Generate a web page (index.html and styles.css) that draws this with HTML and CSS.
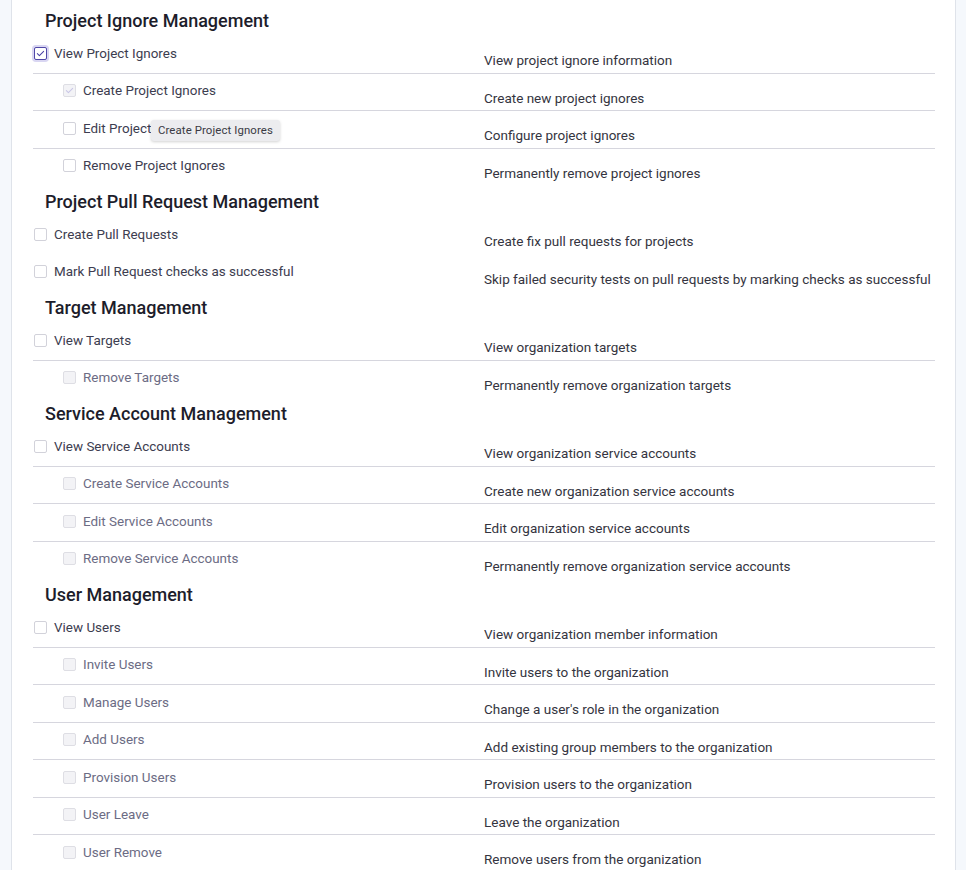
FILE: index.html
```html
<!DOCTYPE html>
<html lang="en">
<head>
<meta charset="utf-8">
<title>Permissions</title>
<link rel="stylesheet" href="styles.css">
</head>
<body>
<div class="shell">
  <div class="gutter"></div>
  <main class="panel">
    <section class="group">
      <h2 class="group-title">Project Ignore Management</h2>
      <div class="perm line">
        <label class="perm-label"><span class="cb cb-checked cb-focus"><svg viewBox="0 0 14 14"><path d="M3 7.2l2.6 2.6L11 4.2"/></svg></span>View Project Ignores</label>
        <div class="perm-desc">View project ignore information</div>
      </div>
      <div class="perm line child">
        <label class="perm-label"><span class="cb cb-disabled cb-checked-disabled"><svg viewBox="0 0 14 14"><path d="M3 7.2l2.6 2.6L11 4.2"/></svg></span>Create Project Ignores</label>
        <div class="perm-desc">Create new project ignores</div>
      </div>
      <div class="perm line child has-tip">
        <label class="perm-label"><span class="cb"></span>Edit Project Ignores</label>
        <div class="perm-desc">Configure project ignores</div>
        <div class="tooltip">Create Project Ignores</div>
      </div>
      <div class="perm child">
        <label class="perm-label"><span class="cb"></span>Remove Project Ignores</label>
        <div class="perm-desc">Permanently remove project ignores</div>
      </div>
    </section>

    <section class="group">
      <h2 class="group-title">Project Pull Request Management</h2>
      <div class="perm">
        <label class="perm-label"><span class="cb"></span>Create Pull Requests</label>
        <div class="perm-desc">Create fix pull requests for projects</div>
      </div>
      <div class="perm">
        <label class="perm-label"><span class="cb"></span>Mark Pull Request checks as successful</label>
        <div class="perm-desc">Skip failed security tests on pull requests by marking checks as successful</div>
      </div>
    </section>

    <section class="group">
      <h2 class="group-title">Target Management</h2>
      <div class="perm line">
        <label class="perm-label"><span class="cb"></span>View Targets</label>
        <div class="perm-desc">View organization targets</div>
      </div>
      <div class="perm child disabled">
        <label class="perm-label"><span class="cb cb-disabled"></span>Remove Targets</label>
        <div class="perm-desc">Permanently remove organization targets</div>
      </div>
    </section>

    <section class="group">
      <h2 class="group-title">Service Account Management</h2>
      <div class="perm line">
        <label class="perm-label"><span class="cb"></span>View Service Accounts</label>
        <div class="perm-desc">View organization service accounts</div>
      </div>
      <div class="perm line child disabled">
        <label class="perm-label"><span class="cb cb-disabled"></span>Create Service Accounts</label>
        <div class="perm-desc">Create new organization service accounts</div>
      </div>
      <div class="perm line child disabled">
        <label class="perm-label"><span class="cb cb-disabled"></span>Edit Service Accounts</label>
        <div class="perm-desc">Edit organization service accounts</div>
      </div>
      <div class="perm child disabled">
        <label class="perm-label"><span class="cb cb-disabled"></span>Remove Service Accounts</label>
        <div class="perm-desc">Permanently remove organization service accounts</div>
      </div>
    </section>

    <section class="group">
      <h2 class="group-title">User Management</h2>
      <div class="perm line">
        <label class="perm-label"><span class="cb"></span>View Users</label>
        <div class="perm-desc">View organization member information</div>
      </div>
      <div class="perm line child disabled">
        <label class="perm-label"><span class="cb cb-disabled"></span>Invite Users</label>
        <div class="perm-desc">Invite users to the organization</div>
      </div>
      <div class="perm line child disabled">
        <label class="perm-label"><span class="cb cb-disabled"></span>Manage Users</label>
        <div class="perm-desc">Change a user's role in the organization</div>
      </div>
      <div class="perm line child disabled">
        <label class="perm-label"><span class="cb cb-disabled"></span>Add Users</label>
        <div class="perm-desc">Add existing group members to the organization</div>
      </div>
      <div class="perm line child disabled">
        <label class="perm-label"><span class="cb cb-disabled"></span>Provision Users</label>
        <div class="perm-desc">Provision users to the organization</div>
      </div>
      <div class="perm line child disabled">
        <label class="perm-label"><span class="cb cb-disabled"></span>User Leave</label>
        <div class="perm-desc">Leave the organization</div>
      </div>
      <div class="perm line child disabled">
        <label class="perm-label"><span class="cb cb-disabled"></span>User Remove</label>
        <div class="perm-desc">Remove users from the organization</div>
      </div>
    </section>
  </main>
  <div class="gutter"></div>
</div>
</body>
</html>
```
FILE: styles.css
```css
* { box-sizing: border-box; }
html, body {
  margin: 0;
  padding: 0;
  background: #f5f8fc;
  font-family: Roboto, "Noto Sans", "Liberation Sans", sans-serif;
  overflow: hidden;
}
.shell {
  display: flex;
  height: 870px;
}
.gutter {
  width: 11px;
  flex: none;
  background: #f5f8fc;
}
.gutter:last-child { width: 10px; }
.panel {
  flex: 1;
  background: #fff;
  border-left: 1px solid #dfe3ea;
  border-right: 1px solid #dfe3ea;
  padding: 5px 20px 0 21px;
}
.group-title {
  margin: 0;
  padding-left: 12px;
  height: 31px;
  line-height: 31px;
  font-size: 18px;
  font-weight: 500;
  color: #1d1d2b;
}
.perm {
  position: relative;
  display: grid;
  grid-template-columns: 451px 1fr;
  height: 37.5px;
  border-bottom: 1px solid transparent;
}
.perm.line { border-bottom-color: #d6d6de; }
.perm-label {
  display: flex;
  align-items: center;
  gap: 7px;
  margin-top: 7px;
  height: 20px;
  padding-left: 1px;
  font-size: 13.45px;
  color: #3d3d50;
  white-space: nowrap;
}
.child .perm-label { padding-left: 30px; }
.disabled .perm-label { color: #6c6c84; }
.perm-desc {
  padding-top: 14px;
  line-height: 20px;
  font-size: 13.5px;
  color: #343440;
  white-space: nowrap;
}
.cb {
  width: 13px;
  height: 13px;
  flex: none;
  border: 1px solid #d2d2da;
  border-radius: 2px;
  background: #fff;
  display: flex;
  align-items: center;
  justify-content: center;
}
.cb svg {
  width: 11px;
  height: 11px;
  fill: none;
  stroke-width: 1.3;
  stroke-linecap: round;
  stroke-linejoin: round;
}
.cb-checked {
  border-color: #5048a8;
}
.cb-checked svg { stroke: #4a42a6; }
.cb-focus {
  box-shadow: 0 0 0 2px #d9d6f2;
}
.cb-disabled {
  background: #f3f3f6;
  border-color: #dedee4;
}
.cb-checked-disabled svg { stroke: #c9c6e6; }
.tooltip {
  position: absolute;
  left: 118px;
  top: 9px;
  padding: 0 7px;
  height: 21px;
  line-height: 21px;
  font-size: 11.4px;
  color: #3a3a44;
  background: #ececef;
  border-radius: 3px;
  box-shadow: 0 1px 3px rgba(0,0,0,0.18);
  white-space: nowrap;
  letter-spacing: 0.1px;
}
```
